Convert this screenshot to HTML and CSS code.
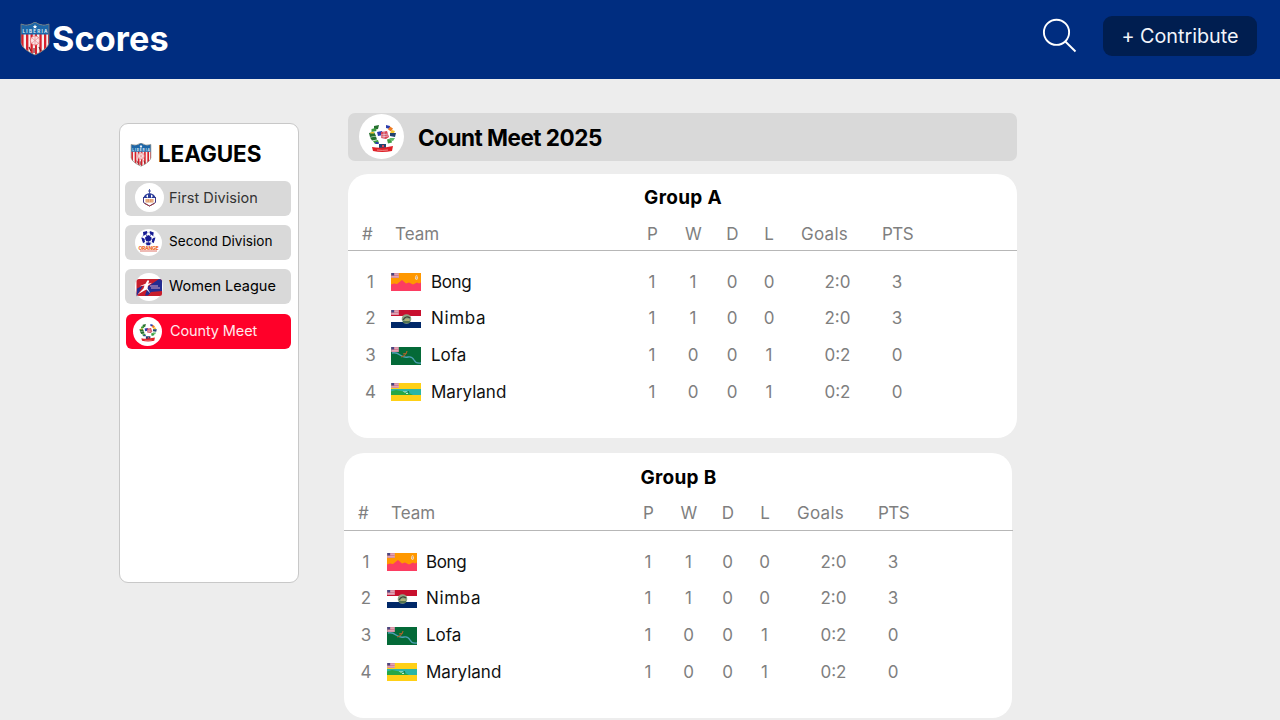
FILE: index.html
```html
<!DOCTYPE html>
<html lang="en">
<head>
<meta charset="utf-8">
<title>Scores</title>
<link rel="stylesheet" href="styles.css">
</head>
<body>
<svg class="defs" width="0" height="0" aria-hidden="true">
  <defs>
    <clipPath id="shield"><path d="M1 2Q8 5 15 0Q22 5 29 2V21Q28 27 15 33Q2 27 1 21Z"/></clipPath>
    <symbol id="crest" viewBox="0 0 30 34">
      <g clip-path="url(#shield)">
        <path fill="#f4f1ef" d="M0 0h30v34H0z"/>
        <path fill="#d8202b" d="M1 12h2.6v22H1zM6 12h2.4v22H6zM10.5 12h2.3v22h-2.3zM15 12h2v22h-2zM19.4 12h2.3v22h-2.3zM24 12h2.3v22H24zM28 12h2v22h-2z"/>
        <path fill="#1d66a8" d="M0 0h30v12.500H0z"/>
        <circle cx="15" cy="18.500" r="4.600" fill="#fbe4e4" stroke="#e26a70" stroke-width=".8"/>
        <path d="M12 16l6 5m0-5l-6 5M15 14v9" stroke="#e68b90" stroke-width=".7"/>
        <path d="M9 25l2 4m8-4l2 4m-7-3v5" stroke="#7b2025" stroke-width="1.200"/>
      </g>
      <path fill="#fff" d="M15 2.500l.7 1.400 1.500.2-1.100 1 .3 1.500-1.400-.7-1.400.7.3-1.500-1.100-1 1.500-.2z"/>
      <text class="crest-text" x="15" y="11.300" text-anchor="middle" textLength="25">LIBERIA</text>
      <path d="M1 2Q8 5 15 0Q22 5 29 2V21Q28 27 15 33Q2 27 1 21Z" fill="none" stroke="#7d7f78" stroke-width=".8"/>
    </symbol>
    <symbol id="wreath" viewBox="0 0 45 45">
      <circle cx="22.500" cy="22.500" r="22.500" fill="#fff"/>
      <path fill="#26702f" d="M15 12l5-1-1 4-4 1zM10 19l5-1 2 4-6 1zM11 23.500l6-1 1 3-5 1z"/>
      <path fill="#3d9b40" d="M12.500 15l4-1 1 3-5 1zM14 27l5-1 1 3-4 1zM28 25.500l4-1 1 4-4 1z"/>
      <path fill="#2a3dae" d="M27 11l4 1 0 3-4-1zM18 18l5-1 1 4-5 1zM16 28l3 0 1 2-3 0z"/>
      <path fill="#ef7c22" d="M31 12.500l3 2-2 3-3-2z"/>
      <path fill="#f3c62f" d="M12 18l3 0 0 1.500-4 0zM33 16l3 1-1 2-4 0z"/>
      <path fill="#21436f" d="M31 19l6 0-1 4-5-1zM20 30h7v4h-7z"/>
      <path fill="#5fb96b" d="M31 24l5 0-2 3-4-1z"/>
      <path fill="#d94657" d="M22 18l6-1 2 6-3 2-5-1zM23 31h2v2h-2z"/>
      <path d="M22 21l7-1M22 23l7-1M25 17v7" stroke="#e9d7e1" stroke-width=".7"/>
      <path fill="#df2027" d="M13 33q9 2 21-1l-1 5q-10 2-19 0z"/>
      <path d="M18 36q5 .8 11 0" stroke="#f3a5a5" stroke-width=".8" fill="none"/>
    </symbol>
    <symbol id="first" viewBox="0 0 29 29">
      <circle cx="14.500" cy="14.500" r="14.500" fill="#fff"/>
      <path d="M8.500 14v5.500l6 3.500 6-3.500V14" fill="#fff" stroke="#453a83" stroke-width="1"/>
      <path d="M8.500 15Q9 11 14.500 10Q20 11 20.500 15Z" fill="#293a99"/>
      <path d="M14.500 6v5M13 8h3" stroke="#3c4a9c" stroke-width=".9"/>
      <path d="M11 13l2-1.500v3.500zm7 0l-2-1.500v3.500z" fill="#fff"/>
      <path fill="#e39c6c" d="M10.500 16h8v3.500h-8z"/>
      <path d="M12 16v3m2.500-3v3m2.500-3v3" stroke="#f3d0b4" stroke-width=".6"/>
      <path d="M9.500 20.500l5 2.500 5-2.500" fill="none" stroke="#a3302c" stroke-width=".8"/>
    </symbol>
    <symbol id="second" viewBox="0 0 27 27">
      <circle cx="13.500" cy="13.500" r="13.500" fill="#fff"/>
      <circle cx="13.300" cy="9.300" r="6" fill="#fff" stroke="#8d94c8" stroke-width=".5"/>
      <path d="M13.300 9L10 4M13.300 9L17 4M13.300 9l6 2M13.300 9l-6 2M13.300 9v6" stroke="#161b93" stroke-width=".8"/>
      <path fill="#161b93" d="M13.300 6l3.300 2.400-1.200 3.800h-4.200L10 8.400zM8 3l4-1 .3 2.200L8.500 7zM14.800 2l4 1.500-.8 3.500-3.200-2.500zM6.200 8.500l2.600.8 1.300 3.200-2 1.800zM20.500 8.500l-2.600.8-1.300 3.200 2 1.800zM11 13.500h4.800L15 16.300h-3.500z"/>
      <text class="orange-text" x="13.500" y="20.800" text-anchor="middle" textLength="20">ORANGE</text>
      <path d="M5 22h17" stroke="#d55347" stroke-width=".8"/>
    </symbol>
    <symbol id="women" viewBox="0 0 28 28">
      <circle cx="14" cy="14" r="14" fill="#fff"/>
      <rect x="1.500" y="6" width="25.500" height="17" rx="2.500" fill="#c81e2c"/>
      <path d="M2 15.500l6-3-6.500 11zM10 22.500l3-9 11-7.500q3 0 3 2.500V18l-11 1-3 3.500z" fill="#232c91"/>
      <path d="M12.300 7.500q2-1 1.700 1.300l-1 2 4-1-4 3-.5 2.700 3 5-4-4-2 1-7 4 6-6 1-3-5 .8 6-2.500z" fill="#fff"/>
      <path d="M15 13h8m-7 2h9" stroke="#d8a5c2" stroke-width="1"/>
    </symbol>
    <symbol id="canton" viewBox="0 0 9 6">
      <path fill="#e9b9c6" d="M0 0h9v6H0z"/><path d="M0 1h9M0 3h9M0 5h9" stroke="#c45d78" stroke-width=".8"/><path fill="#4a4680" d="M0 0h3.500v3H0z"/>
    </symbol>
    <symbol id="bong" viewBox="0 0 30 18">
      <path fill="#ff9800" d="M0 0h30v18H0z"/>
      <path fill="#fc3d62" d="M0 11.500l3-1 3 .5 5-4 4 3.500 3-1 4 2 4-2 2 1 2-1v8.500H0z"/>
      <path d="M24.500 3l1.500-1 1 3-1 2-2-1z" fill="#f8e3c0"/><path d="M25.500 3v3" stroke="#bd7857" stroke-width=".5"/>
      <use href="#canton" width="8" height="5"/>
    </symbol>
    <symbol id="nimba" viewBox="0 0 30 18">
      <path fill="#fff" d="M0 0h30v18H0z"/><path fill="#c8102e" d="M0 0h30v6H0z"/><path fill="#002868" d="M0 12h30v6H0z"/>
      <circle cx="15.500" cy="9" r="4.800" fill="#8fa583"/>
      <path d="M12 10q3-5 7-2" stroke="#3b4434" stroke-width="1.300" fill="none"/><path d="M12 12h7" stroke="#365b35" stroke-width="1.300"/><path d="M14 10h4" stroke="#d3c26a"/>
      <use href="#canton" width="8" height="5"/>
    </symbol>
    <symbol id="lofa" viewBox="0 0 30 18">
      <path fill="#046a38" d="M0 0h30v18H0z"/>
      <path d="M1 6Q5 5 9 8T17 10T23 13T30 16" stroke="#4e9fb5" stroke-width="1.300" fill="none"/>
      <path d="M10 10q5-1 6-6M12 7l4-1" stroke="#a8642b" stroke-width="1.200" fill="none"/>
      <use href="#canton" width="8" height="5"/>
    </symbol>
    <symbol id="maryland" viewBox="0 0 30 18">
      <path fill="#ffd016" d="M0 0h30v18H0z"/><path fill="#2bb5a6" d="M0 6h30v6H0z"/>
      <path fill="#28a745" d="M0 8.500l5-1.500 5 1 8 2 4 2H0z"/><path d="M12.500 8l1.500 1.500L15.500 8m-.5 2.500h2" stroke="#e1f2dc" fill="none" stroke-width=".9"/><path d="M17 8l1 2" stroke="#1e6a36"/>
      <use href="#canton" width="8" height="5"/>
    </symbol>
  </defs>
</svg>
<header class="topbar">
  <div class="brand"><svg class="brand-crest"><use href="#crest"/></svg><span class="brand-name">Scores</span></div>
  <svg class="search" viewBox="0 0 36 36"><circle cx="14.500" cy="14.300" r="12.600"/><path d="M23.300 23.500L33.500 33.500"/></svg>
  <button class="contribute"><span>+ Contribute</span></button>
</header>
<div class="layout">
  <nav class="sidebar">
    <h2 class="side-title"><svg class="side-crest"><use href="#crest"/></svg><span>LEAGUES</span></h2>
    <a class="league league-first"><svg><use href="#first"/></svg><span>First Division</span></a>
    <a class="league league-second"><svg><use href="#second"/></svg><span>Second Division</span></a>
    <a class="league league-women"><svg><use href="#women"/></svg><span>Women League</span></a>
    <a class="league active"><svg><use href="#wreath"/></svg><span>County Meet</span></a>
  </nav>
  <main class="content">
    <div class="meet"><svg><use href="#wreath"/></svg><h1>Count Meet 2025</h1></div>
    <section class="group group-a">
      <h2>Group A</h2>
      <div class="grid head"><span class="hash">#</span><span class="team-head">Team</span><span class="p-head">P</span><span class="p-head">W</span><span class="p-head">D</span><span>L</span><span class="goals-head">Goals</span><span class="pts-head">PTS</span></div>
      <div class="rows">
        <div class="grid"><span>1</span><svg><use href="#bong"/></svg><b class="bong">Bong</b><span>1</span><span>1</span><span>0</span><span>0</span><span>2:0</span><span>3</span></div>
        <div class="grid"><span>2</span><svg><use href="#nimba"/></svg><b class="nimba">Nimba</b><span>1</span><span>1</span><span>0</span><span>0</span><span>2:0</span><span>3</span></div>
        <div class="grid"><span>3</span><svg><use href="#lofa"/></svg><b>Lofa</b><span>1</span><span>0</span><span>0</span><span>1</span><span>0:2</span><span>0</span></div>
        <div class="grid"><span>4</span><svg><use href="#maryland"/></svg><b>Maryland</b><span>1</span><span>0</span><span>0</span><span>1</span><span>0:2</span><span>0</span></div>
      </div>
    </section>
    <section class="group group-b">
      <h2>Group B</h2>
      <div class="grid head"><span class="hash">#</span><span class="team-head">Team</span><span class="p-head">P</span><span>W</span><span>D</span><span>L</span><span class="goals-head">Goals</span><span class="pts-head">PTS</span></div>
      <div class="rows">
        <div class="grid"><span>1</span><svg><use href="#bong"/></svg><b class="bong">Bong</b><span>1</span><span>1</span><span>0</span><span>0</span><span>2:0</span><span>3</span></div>
        <div class="grid"><span>2</span><svg><use href="#nimba"/></svg><b class="nimba">Nimba</b><span>1</span><span>1</span><span>0</span><span>0</span><span>2:0</span><span>3</span></div>
        <div class="grid"><span>3</span><svg><use href="#lofa"/></svg><b>Lofa</b><span>1</span><span>0</span><span>0</span><span>1</span><span>0:2</span><span>0</span></div>
        <div class="grid"><span>4</span><svg><use href="#maryland"/></svg><b>Maryland</b><span>1</span><span>0</span><span>0</span><span>1</span><span>0:2</span><span>0</span></div>
      </div>
    </section>
  </main>
</div>
</body>
</html>
```

FILE: styles.css
```css
* { box-sizing: border-box; margin: 0; padding: 0; }
body { width: 1280px; height: 720px; overflow: hidden; background: #ededed; font-family: Inter, "Liberation Sans", sans-serif; color: #000; }
.defs { display: block; height: 0; }
svg { display: block; flex: none; }
.crest-text { font: 700 4.6px Inter, sans-serif; fill: #dcecf5; }
.orange-text { font: 800 5px Inter, sans-serif; fill: #ee6b2d; }
.topbar { display: flex; align-items: flex-start; height: 79px; padding: 0 23px 0 20px; background: #002d80; }
.brand { display: flex; margin-right: auto; }
.brand-crest { width: 30px; height: 34px; margin-top: 22px; }
.brand-name { margin: 16px 0 0 2px; font-size: 34.200px; line-height: 46px; font-weight: 650; color: #fff; letter-spacing: .1px; }
.search { width: 36px; height: 36px; margin: 18px 25px 0 0; fill: none; stroke: #fff; stroke-width: 1.900; }
.contribute { width: 154px; height: 40px; margin-top: 16px; border: 0; border-radius: 9px; background: #001e50; color: #f2f5fa; font: 400 19.800px/40px Inter, sans-serif; letter-spacing: -.02px; white-space: nowrap; }
.layout { display: flex; align-items: flex-start; padding-left: 119px; }
.sidebar { display: flex; flex-direction: column; width: 180px; height: 460px; margin-top: 44px; padding: 0 7px 0 5px; border: 1px solid #c8c8c8; border-radius: 9px; background: #fff; }
.side-title { display: flex; align-items: center; height: 57px; padding: 4px 0 0 5px; font-size: 22.500px; font-weight: 650; letter-spacing: -.1px; }
.side-title span { margin-top: -2px; }
.side-crest { width: 22px; height: 24px; margin-right: 6px; }
.league { display: flex; align-items: center; height: 35px; margin-bottom: 9px; border-radius: 6px; background: #d9d9d9; font-size: 14.500px; white-space: nowrap; }
.league span { margin-top: -2px; }
.league svg { width: 29px; height: 29px; margin: 0 5px 0 10px; }
.league-first { color: #333; letter-spacing: .06px; }
.league-first svg { margin-top: -2px; }
.league-second { font-size: 13.600px; }
.league-second span { margin-top: -3px; }
.league-second svg { width: 27px; height: 27px; margin-right: 7px; }
.league-women svg { width: 28px; height: 28px; margin-right: 6px; }
.league.active { margin: 1px 0 0 1px; background: #ff0029; color: #ffe9ec; letter-spacing: -.12px; }
.league.active svg { margin: -1px 8px 0 7px; }
.content { width: 669px; margin: 34px 0 0 49px; }
.meet { display: flex; align-items: center; height: 48px; padding-left: 11px; border-radius: 7px; background: #d9d9d9; }
.meet svg { width: 45px; height: 45px; margin: -2px 14px 0 0; }
.meet h1 { font-size: 22.500px; font-weight: 650; letter-spacing: -.5px; }
.group { width: 669px; height: 264px; margin-top: 13px; border-radius: 20px; background: #fff; }
.group-b { width: 668px; height: 265px; margin: 15px 0 0 -4px; padding-top: 1px; }
.group h2 { height: 43px; padding-top: 10px; text-align: center; font-size: 19px; line-height: 27px; font-weight: 650; letter-spacing: .3px; }
.group h2 { padding-left: 1px; }
.grid { display: grid; grid-template-columns: 46px 37px 200px 42px 40px 38px 36px 101px 18px; align-items: center; justify-items: center; font-size: 17px; color: #7f7f7f; white-space: nowrap; }
.head { height: 34px; border-bottom: 1px solid #b7b7b7; }
.group-b .head { width: 669px; }
.group-b .head span { margin-top: -1px; }
.hash { margin-right: 7px; }
.team-head { grid-column: 2 / 4; justify-self: start; margin-left: 1px; }
.p-head { margin-left: 1px; }
.goals-head { margin-right: 26px; letter-spacing: .3px; }
.pts-head { margin-left: 1px; letter-spacing: -.5px; }
.rows { margin-top: 13px; }
.rows .grid { height: 36.660px; }
.rows .grid > span, .rows b { margin-top: -1px; }
.rows .grid > span:first-child { margin-right: 1px; }
.group-b .rows .grid > span:first-child { margin-right: 2px; }
.group-b .rows .grid > span:nth-child(n+5):nth-child(-n+7) { margin-right: 1px; }
.rows svg { width: 30px; height: 18px; justify-self: start; margin-left: -3px; }
.rows b { justify-self: start; font-weight: 400; color: #111; }
.group-b .rows b { margin-left: -1px; }
.rows .bong { letter-spacing: -.35px; }
.rows .nimba { letter-spacing: .65px; }
```
